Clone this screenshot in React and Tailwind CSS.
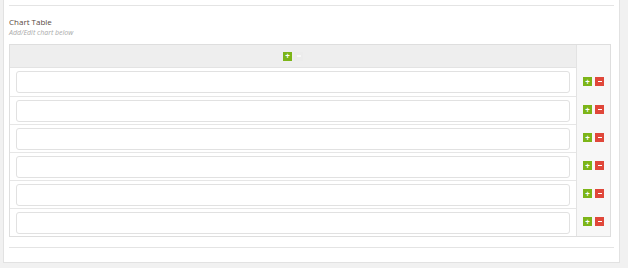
import React from "react";

const rows = [0, 1, 2, 3, 4, 5];

function PlusBtn({ faded }) {
  return (
    <span
      className={`flex h-[9px] w-[9px] items-center justify-center text-[8px] font-bold leading-none text-white ${
        faded ? "bg-[#e8e8e8] text-[#f6f6f6]" : "bg-[#7cb518]"
      }`}
    >
      +
    </span>
  );
}

function MinusBtn({ faded }) {
  return (
    <span
      className={`flex h-[9px] w-[9px] items-center justify-center ${
        faded ? "bg-[#ececec]" : "bg-[#e0473a]"
      }`}
    >
      <span className={`h-[1.5px] w-[4px] ${faded ? "bg-[#f8f8f8]" : "bg-white"}`} />
    </span>
  );
}

export default function App() {
  return (
    <div
      className="h-[268px] w-[628px] bg-[#f1f1f1]"
      style={{ fontFamily: '"Open Sans", "Liberation Sans", sans-serif' }}
    >
      <div className="ml-[3px] h-[263px] w-[617px] border-x border-b border-[#e2e2e2] bg-white px-[5px] pt-[5px]">
        <div className="h-[2px] border-t border-[#e4e4e4]" />

        <div className="mt-[10px] text-[8px] leading-[10px] text-[#574840]">Chart Table</div>
        <div className="mt-[1px] text-[7px] italic leading-[9px] text-[#aaa]">Add/Edit chart below</div>

        {/* table */}
        <div className="mt-[7px] flex w-[602px] border border-[#dedede]">
          <div className="flex-1">
            <div className="flex h-[23px] items-center justify-center gap-[2px] border-b border-[#e3e3e3] bg-[#eeeeee]">
              <PlusBtn />
              <MinusBtn faded />
            </div>
            {rows.map((r) => (
              <div
                key={r}
                className={`h-[28px] pl-[6px] pr-[6px] pt-[3px] ${r > 0 ? "border-t border-[#e6e6e6]" : ""}`}
              >
                <div className="h-[22px] rounded-[3px] border border-[#e1e1e1] bg-white" />
              </div>
            ))}
          </div>
          <div className="w-[34px] border-l border-[#e3e3e3] bg-[#f7f7f7]">
            <div className="h-[23px]" />
            {rows.map((r) => (
              <div key={r} className="flex h-[28px] items-center justify-center gap-[3px] pb-[1px]">
                <PlusBtn />
                <MinusBtn />
              </div>
            ))}
          </div>
        </div>

        <div className="mt-[10px] border-t border-[#e4e4e4]" />
      </div>
    </div>
  );
}
